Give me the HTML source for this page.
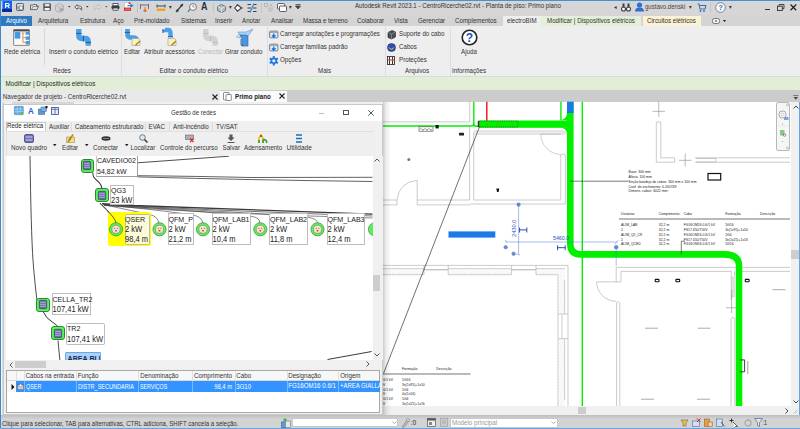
<!DOCTYPE html>
<html><head><meta charset="utf-8">
<style>
*{box-sizing:border-box;margin:0;padding:0}
html,body{width:800px;height:429px;overflow:hidden;background:#fff}
body{position:relative;font-family:"Liberation Sans",sans-serif;font-size:6.2px;color:#333}
.a{position:absolute}
.t{position:absolute;white-space:nowrap;line-height:8px;transform:scaleY(1.14)}
svg{position:absolute;overflow:visible}
</style></head><body>
<!-- window border -->
<div class="a" style="left:0;top:0;width:800px;height:1px;background:#4a90d9"></div>
<div class="a" style="left:0;top:0;width:1px;height:429px;background:#3e87d3"></div>
<div class="a" style="left:799px;top:101px;width:1px;height:328px;background:#6aa5e0"></div>

<!-- title bar -->
<div class="a" style="left:1px;top:1px;width:799px;height:14px;background:#d6d6d6"></div>
<!-- R logo -->
<div class="a" style="left:2.2px;top:1.1px;width:10.2px;height:8.4px;background:#1463ee"></div>
<div class="a" style="left:2.2px;top:1.1px;width:1.3px;height:8.4px;background:#5a9af8"></div>
<div class="a" style="left:2.2px;top:9.4px;width:10.2px;height:3px;background:#0b2d92"></div>
<svg style="left:5.4px;top:3.2px" width="5" height="5"><path d="M0.6 5 L0.6 0.5 L2.8 0.5 Q4.2 0.5 4.2 1.7 Q4.2 2.9 2.8 2.9 L0.6 2.9 M2.6 2.9 L4.4 5" fill="none" stroke="#fff" stroke-width="1.1"/></svg>
<!-- quick access icons -->
<svg style="left:16px;top:3px" width="8" height="8"><rect x="0.5" y="0.5" width="7" height="7" rx="0.8" fill="#dfe3e8" stroke="#5c6470" stroke-width="1"/><path d="M2 3 L2 6.5" stroke="#5c6470" stroke-width="1"/><rect x="3.3" y="3" width="3.2" height="3.3" fill="#f4f4f4" stroke="#6a727c" stroke-width="0.6"/><circle cx="1.5" cy="1.5" r="0.7" fill="#6aa0e0"/></svg>
<svg style="left:30px;top:4.3px" width="9" height="6"><path d="M0.5 1 L3 1 L3.8 0.5 L6.5 0.5 L6.5 2 L8.6 2 L7 5.6 L0.5 5.6 Z" fill="#e4e4e4" stroke="#5a6068" stroke-width="0.9"/><path d="M1.6 5.4 L2.8 2.6 L8.6 2.6" fill="none" stroke="#5a6068" stroke-width="0.6"/></svg>
<svg style="left:43px;top:3px" width="8" height="8"><rect x="0.3" y="0.3" width="7.6" height="7.6" rx="1" fill="#4a5462"/><rect x="1.8" y="0.8" width="4.6" height="2.6" fill="#e6e6e6"/><rect x="1.6" y="5" width="5" height="2.4" fill="#f6f6f6"/></svg>
<svg style="left:55px;top:2.5px" width="9" height="10"><path d="M4.5 0.5 L8.5 2.5 L8.5 7.5 L4.5 9.5 L0.5 7.5 L0.5 2.5 Z" fill="#d2d2d2" stroke="#ababab" stroke-width="0.8"/><path d="M0.5 2.5 L4.5 4.5 L8.5 2.5 M4.5 4.5 L4.5 9.5" stroke="#b6b6b6" fill="none" stroke-width="0.7"/><circle cx="6.5" cy="6.5" r="1.6" fill="#a0a0a0"/></svg>
<svg style="left:68px;top:6px" width="3" height="2"><path d="M0 0 L2.6 0 L1.3 1.6 Z" fill="#333"/></svg>
<svg style="left:74px;top:3.5px" width="9" height="7"><path d="M3.2 0.8 L0.8 3 L3.2 5.2 L3.2 4 L5.5 4 Q7 4 7.6 6.2 Q8.2 2 5.5 2 L3.2 2 Z" fill="#f4f4f4" stroke="#4a4f56" stroke-width="0.9" stroke-linejoin="round"/></svg>
<svg style="left:86.3px;top:6px" width="3" height="2"><path d="M0 0 L2.6 0 L1.3 1.6 Z" fill="#333"/></svg>
<svg style="left:92.5px;top:3.5px" width="9" height="7"><path d="M5.8 0.8 L8.2 3 L5.8 5.2 L5.8 4 L3.5 4 Q2 4 1.4 6.2 Q0.8 2 3.5 2 L5.8 2 Z" fill="#e4e4e4" stroke="#bcbcbc" stroke-width="0.9" stroke-linejoin="round"/></svg>
<svg style="left:105.2px;top:6px" width="3" height="2"><path d="M0 0 L2.6 0 L1.3 1.6 Z" fill="#555"/></svg>
<svg style="left:111px;top:2.8px" width="9" height="8"><rect x="2" y="0.5" width="5" height="2.5" fill="#fff" stroke="#3a3f47" stroke-width="0.8"/><rect x="0.4" y="2.6" width="8.2" height="3.6" rx="1.6" fill="#3a3f47"/><rect x="2" y="5" width="5" height="2.6" fill="#c8d4e0" stroke="#3a3f47" stroke-width="0.6"/></svg>
<svg style="left:123.7px;top:2.3px" width="9" height="9"><rect x="0.4" y="0.4" width="6" height="8.2" fill="#fff" stroke="#b0b0b0" stroke-width="0.5"/><rect x="0" y="5.6" width="7" height="3.2" fill="#d8251c"/><path d="M3.5 3.6 L7.8 3.6 M6.6 2.3 L8.6 3.6 L6.6 4.9" stroke="#2d82d8" stroke-width="1.2" fill="none"/><rect x="4.6" y="0.4" width="1.8" height="1.6" fill="#d8251c"/><path d="M1 7.2 L6 7.2" stroke="#fff" stroke-width="0.5"/></svg>
<div class="a" style="left:137px;top:3px;width:1px;height:10px;background:#c0c0c0"></div>
<svg style="left:140px;top:3px" width="9" height="10"><path d="M0.5 1 L0.5 6 M8.5 1 L8.5 6 M0.5 2 L8.5 2" stroke="#6a7078" stroke-width="1"/><circle cx="5" cy="7.5" r="1.6" fill="#e8702a"/><path d="M5 4 L5 6" stroke="#e8702a" stroke-width="1"/></svg>
<svg style="left:156px;top:3px" width="10" height="9"><path d="M1 3 L9 3 M1 1.5 L1 4.5 M9 1.5 L9 4.5" stroke="#3a4a5a" stroke-width="1"/><rect x="0.5" y="5.5" width="9" height="2.5" rx="1" fill="#e8a820"/></svg>
<div class="t" style="left:169px;top:3px;font-size:5px;color:#333">▾</div>
<svg style="left:175px;top:3px" width="9" height="10"><path d="M1 9 L8 1" stroke="#3a4048" stroke-width="1.2"/><circle cx="2.5" cy="7.5" r="1.2" fill="#3a4048"/><circle cx="6.5" cy="2.5" r="1.2" fill="#3a4048"/></svg>
<svg style="left:187px;top:3px" width="10" height="10"><circle cx="6" cy="4" r="3.4" fill="#fafafa" stroke="#555" stroke-width="0.8"/><path d="M6 2 L6 4 L7.5 4" stroke="#555" stroke-width="0.6" fill="none"/><path d="M3 6 L1 9" stroke="#3a6fb8" stroke-width="1.2"/></svg>
<div class="t" style="left:201px;top:2px;font-size:9px;font-weight:bold;color:#2a2f36;line-height:11px">A</div>
<div class="a" style="left:213px;top:3px;width:1px;height:10px;background:#c4c4c4"></div>
<svg style="left:217px;top:3.5px" width="9" height="9"><path d="M4.5 0.5 L8.5 2.5 L8.5 6.5 L4.5 8.5 L0.5 6.5 L0.5 2.5 Z" fill="#b4bcc4" stroke="#5a626c" stroke-width="0.8"/><path d="M0.5 2.5 L4.5 4.5 L8.5 2.5 M4.5 4.5 L4.5 8.5" stroke="#f0f0f0" fill="none" stroke-width="0.7"/></svg>
<div class="t" style="left:229px;top:3px;font-size:5px;color:#333">▾</div>
<svg style="left:234px;top:3.5px" width="9" height="8"><path d="M3.5 0.8 L7.5 4 L3.5 7.2 L0.8 4 Z" fill="#fff" stroke="#3a3f46" stroke-width="1.1"/><path d="M7 4 L8.6 4" stroke="#3a3f46" stroke-width="1"/></svg>
<svg style="left:247px;top:3px" width="10" height="10"><path d="M0.5 1.5 L4 1.5 M0.5 5 L4 5 M0.5 8.5 L4 8.5 M6 1.5 L9.5 1.5 M6 5 L9.5 5 M6 8.5 L9.5 8.5" stroke="#3a4048" stroke-width="1.2"/><path d="M3 9.5 L7 0.5" stroke="#3d8fe0" stroke-width="1.3"/></svg>
<div class="a" style="left:261px;top:3px;width:1px;height:10px;background:#c4c4c4"></div>
<svg style="left:264px;top:3px" width="9" height="9"><rect x="0.5" y="0.5" width="3" height="3" fill="none" stroke="#b4b4b4" stroke-width="0.8"/><rect x="5" y="5" width="3" height="3" fill="none" stroke="#b4b4b4" stroke-width="0.8"/><path d="M5.5 0.5 L8.5 3.5 M8.5 0.5 L5.5 3.5" stroke="#b4b4b4" stroke-width="0.8"/></svg>
<svg style="left:277px;top:3px" width="10" height="9"><rect x="0.5" y="0.5" width="7" height="5.5" rx="0.8" fill="#fafafa" stroke="#4a4f57" stroke-width="0.9"/><rect x="2.5" y="3" width="7" height="5.5" rx="0.8" fill="#fafafa" stroke="#4a4f57" stroke-width="0.9"/></svg>
<div class="t" style="left:289px;top:3px;font-size:5px;color:#333">▾</div>
<svg style="left:295px;top:4px" width="6" height="6"><path d="M0.5 0.5 L5.5 0.5 M0.5 2 L5.5 2 L3 5 Z" stroke="#444" fill="#444" stroke-width="0.8"/></svg>
<div class="t" style="left:355px;top:2.2px;font-size:6.15px;color:#333">Autodesk Revit 2023.1 - CentroRicerche02.rvt - Planta de piso: Primo piano</div>
<div class="t" style="left:614px;top:3px;font-size:5px;color:#333">◂</div>
<svg style="left:621px;top:3px" width="10" height="9"><circle cx="2.5" cy="6" r="2" fill="#fff" stroke="#3a4048" stroke-width="1.1"/><circle cx="7.5" cy="6" r="2" fill="#fff" stroke="#3a4048" stroke-width="1.1"/><rect x="1.5" y="0.5" width="2" height="4" fill="#3a4048"/><rect x="6.5" y="0.5" width="2" height="4" fill="#3a4048"/></svg>
<svg style="left:635px;top:2px" width="9" height="10"><circle cx="4.5" cy="3" r="2.6" fill="#2f6fd0"/><path d="M0 9.5 Q0 5.5 4.5 5.5 Q9 5.5 9 9.5 Z" fill="#2f6fd0"/></svg>
<div class="t" style="left:645px;top:2.5px;font-size:6.05px;color:#444">gustavo.denski</div>
<div class="t" style="left:689px;top:3px;font-size:5px;color:#333">▾</div>
<svg style="left:697px;top:3px" width="9" height="9"><path d="M0.5 1 L2 1 L3 6 L8 6 L8.8 2.5 L2.5 2.5" fill="none" stroke="#3d6fb8" stroke-width="1.1"/><circle cx="3.5" cy="8" r="0.9" fill="#3d6fb8"/><circle cx="7" cy="8" r="0.9" fill="#3d6fb8"/></svg>
<div class="a" style="left:710px;top:3px;width:1px;height:10px;background:#c4c4c4"></div>
<svg style="left:715px;top:2px" width="11" height="11"><circle cx="5.5" cy="5.5" r="4.8" fill="#fafafa" stroke="#6a6a6a" stroke-width="0.8"/><text x="5.5" y="8.2" font-size="7.5" font-weight="bold" fill="#2d6fd0" text-anchor="middle" font-family="Liberation Sans">?</text></svg>
<div class="t" style="left:729px;top:3px;font-size:5px;color:#333">▾</div>
<div class="a" style="left:765px;top:8.6px;width:4.6px;height:1.3px;background:#333"></div>
<svg style="left:777px;top:3.8px" width="8" height="7"><rect x="0.5" y="2.2" width="4.8" height="4.3" fill="none" stroke="#333" stroke-width="0.9"/><path d="M2.2 2.2 L2.2 0.5 L7 0.5 L7 4.6 L5.3 4.6" fill="none" stroke="#333" stroke-width="0.9"/></svg>
<svg style="left:790px;top:4.2px" width="7" height="7"><path d="M0.5 0.5 L6.2 6.2 M6.2 0.5 L0.5 6.2" stroke="#222" stroke-width="1.25"/></svg>

<!-- tab row -->
<div class="a" style="left:1px;top:15px;width:799px;height:11px;background:#d4d4d4"></div>
<div class="a" style="left:1px;top:16px;width:30.5px;height:10px;background:#2f79c0"></div>
<div class="t" style="left:6px;top:17px;font-size:6.2px;color:#fff">Arquivo</div>
<div class="t" style="left:38px;top:17px;font-size:6.2px;color:#333">Arquitetura</div>
<div class="t" style="left:80px;top:17px;font-size:6.2px;color:#333">Estrutura</div>
<div class="t" style="left:113px;top:17px;font-size:6.2px;color:#333">Aço</div>
<div class="t" style="left:134px;top:17px;font-size:6.2px;color:#333">Pré-moldado</div>
<div class="t" style="left:181px;top:17px;font-size:6.2px;color:#333">Sistemas</div>
<div class="t" style="left:215px;top:17px;font-size:6.2px;color:#333">Inserir</div>
<div class="t" style="left:242px;top:17px;font-size:6.2px;color:#333">Anotar</div>
<div class="t" style="left:271px;top:17px;font-size:6.2px;color:#333">Analisar</div>
<div class="t" style="left:303px;top:17px;font-size:6.2px;color:#333">Massa e terreno</div>
<div class="t" style="left:357px;top:17px;font-size:6.2px;color:#333">Colaborar</div>
<div class="t" style="left:394px;top:17px;font-size:6.2px;color:#333">Vista</div>
<div class="t" style="left:418px;top:17px;font-size:6.2px;color:#333">Gerenciar</div>
<div class="t" style="left:455px;top:17px;font-size:6.2px;color:#333">Complementos</div>
<div class="a" style="left:502.5px;top:16px;width:38.5px;height:10px;background:#eeeeee"></div>
<div class="t" style="left:507px;top:17px;font-size:6.2px;color:#333">electroBIM</div>
<div class="a" style="left:541px;top:16px;width:100px;height:10px;background:#e4efd9"></div>
<div class="t" style="left:547px;top:17px;font-size:6.2px;color:#333">Modificar | Dispositivos elétricos</div>
<div class="a" style="left:643px;top:16px;width:58px;height:10px;background:#fbf1d4"></div>
<div class="t" style="left:647px;top:17px;font-size:6.2px;color:#333">Circuitos elétricos</div>
<svg style="left:712px;top:18px" width="8" height="6"><rect x="0.5" y="0.5" width="7" height="5" rx="2" fill="#f4f4f4" stroke="#555" stroke-width="0.8"/><rect x="3" y="2.5" width="2" height="1" fill="#333"/></svg>
<svg style="left:723px;top:20.3px" width="4" height="3"><path d="M0 0 L3 0 L1.5 2 Z" fill="#111"/></svg>

<!-- ribbon -->
<div class="a" style="left:1px;top:26px;width:799px;height:51px;background:#eeeeee"></div>
<div class="a" style="left:1px;top:76px;width:799px;height:1px;background:#dadada"></div>
<!-- panel separators -->
<div class="a" style="left:44px;top:28px;width:1px;height:37px;background:#d8d8d8"></div>
<div class="a" style="left:121px;top:27px;width:1px;height:49px;background:#dedede"></div>
<div class="a" style="left:266.5px;top:27px;width:1px;height:49px;background:#dedede"></div>
<div class="a" style="left:384.5px;top:27px;width:1px;height:49px;background:#dedede"></div>
<div class="a" style="left:449.5px;top:27px;width:1px;height:49px;background:#dedede"></div>

<!-- Rede eletrica icon -->
<svg style="left:13px;top:29px" width="17" height="17"><rect x="0.6" y="0.6" width="15.8" height="15.8" rx="0.6" fill="#fafafa" stroke="#7a7a7a" stroke-width="0.9"/><rect x="0.6" y="0.6" width="15.8" height="1.8" fill="#4a4a4a"/><rect x="1.7" y="2.9" width="5.6" height="6.7" fill="#3f9be6"/><rect x="12.6" y="2.9" width="3.6" height="2.8" fill="#3f9be6"/><rect x="12.6" y="7.4" width="3.6" height="3.4" fill="#3f9be6"/><rect x="12.6" y="12" width="3.6" height="3.5" fill="#3f9be6"/><path d="M9.9 4 L9.9 13.3 M8.5 4 L11.5 4 M9.9 8.6 L12.6 8.6 M9.9 13.3 L12.6 13.3" stroke="#f08a3a" stroke-width="1"/></svg>
<div class="t" style="left:4px;top:48px;font-size:6.15px;color:#333">Rede elétrica</div>
<!-- pipe icon -->
<svg style="left:75px;top:29px" width="17" height="17"><path d="M3.8 0 L3.8 6.5 Q3.8 9.5 6.8 9.5 L10 9.5 Q13.2 9.5 13.2 12.5 L13.2 16.7" fill="none" stroke="#4aa0e8" stroke-width="5.3"/><path d="M1 4.4 L6.6 4.4 M8.4 6.6 L8.4 12.4 M10.4 13.4 L16 13.4" stroke="#245a8a" stroke-width="1"/></svg>
<div class="t" style="left:49px;top:48px;font-size:6.3px;color:#333">Inserir o conduto elétrico</div>
<div class="t" style="left:53px;top:67px;font-size:6.2px;color:#333">Redes</div>

<svg style="left:124px;top:29px" width="17" height="17"><path d="M3.5 0 L3.5 5 Q3.5 8.5 7 8.5 L9 8.5 Q13 8.5 13 12" fill="none" stroke="#4aa0e8" stroke-width="4.6"/><path d="M0.8 3.4 L6.2 3.4" stroke="#245a8a" stroke-width="1"/><path d="M8 9.5 L14.5 9.5 L16 11 L16 16.5 L8 16.5 Z" fill="#f8f2c0" stroke="#9a9a8a" stroke-width="0.6"/><path d="M11.5 16.3 L16 12" stroke="#b07a20" stroke-width="1.3"/></svg>
<div class="t" style="left:124px;top:48px;font-size:6.2px;color:#333">Editar</div>
<svg style="left:162px;top:29px" width="17" height="17"><path d="M3 0.5 L3 1 Q3 1 6 1 Q8.5 1 8.5 4.5 L8.5 8" fill="none" stroke="#4aa0e8" stroke-width="4.4"/><path d="M1 0 L1 4 M6 7.8 L11 7.8" stroke="#245a8a" stroke-width="1"/><path d="M6 9.5 L12.5 9.5 L14 11 L14 16.5 L6 16.5 Z" fill="#f8f2c0" stroke="#9a9a8a" stroke-width="0.6"/><path d="M9.5 16.3 L14 12" stroke="#b07a20" stroke-width="1.3"/></svg>
<div class="t" style="left:144px;top:48px;font-size:6.2px;color:#333">Atribuir acessórios</div>
<svg style="left:201.5px;top:29px" width="17" height="17"><path d="M3.8 0 L3.8 6.5 Q3.8 9.5 6.8 9.5 L10 9.5 Q13.2 9.5 13.2 12.5 L13.2 16.7" fill="none" stroke="#d2d2d2" stroke-width="5.3"/><path d="M1 4.4 L6.6 4.4 M8.4 6.6 L8.4 12.4 M10.4 13.4 L16 13.4" stroke="#bdbdbd" stroke-width="1"/></svg>
<div class="t" style="left:198px;top:48px;font-size:6.2px;color:#b8b8b8">Conectar</div>
<svg style="left:235px;top:28px" width="18" height="18"><path d="M3 4 L11 4 L18 1 L13 8 L5 8 Z" fill="#a8d4f6" stroke="#4a8ad0" stroke-width="0.5"/><path d="M5 7 L11 7 L13 8 L13 18 L7 18 L7 11 Z" fill="#4a98e4" stroke="#2a5a9a" stroke-width="0.6"/><path d="M1 9 L5 6 L5 10 Z" fill="#c8e4fa" stroke="#4a8ad0" stroke-width="0.4"/><path d="M6 11 L6 17 L8 18" fill="none" stroke="#2a4a7a" stroke-width="0.8"/></svg>
<div class="t" style="left:225px;top:48px;font-size:6.2px;color:#333">Girar conduto</div>
<div class="t" style="left:159.5px;top:67px;font-size:6.35px;color:#333">Editar o conduto elétrico</div>

<svg style="left:269px;top:30px" width="10" height="9"><rect x="0.6" y="1.2" width="8.3" height="6.6" rx="0.8" fill="#e6ecf4" stroke="#6a7480" stroke-width="0.9"/><path d="M0.6 2.6 L8.9 2.6" stroke="#6a7480" stroke-width="0.6"/><path d="M4.75 3.5 L4.75 6.8 M3 5.2 L4.75 7.4 L6.5 5.2" stroke="#1f7ae0" stroke-width="1.3" fill="none"/></svg>
<div class="t" style="left:280px;top:30px;font-size:6.12px;color:#333">Carregar anotações e programações</div>
<svg style="left:269px;top:43px" width="10" height="9"><rect x="0.6" y="1.2" width="8.3" height="6.6" rx="0.8" fill="#e6ecf4" stroke="#6a7480" stroke-width="0.9"/><path d="M0.6 2.6 L8.9 2.6" stroke="#6a7480" stroke-width="0.6"/><path d="M4.75 3.5 L4.75 6.8 M3 5.2 L4.75 7.4 L6.5 5.2" stroke="#1f7ae0" stroke-width="1.3" fill="none"/></svg>
<div class="t" style="left:280px;top:43px;font-size:6.12px;color:#333">Carregar famílias padrão</div>
<svg style="left:269px;top:56px" width="10" height="10"><g transform="translate(4.8 4.8)" fill="#1f7ae0"><circle r="3.3"/><rect x="-1" y="-4.7" width="2" height="9.4"/><rect x="-1" y="-4.7" width="2" height="9.4" transform="rotate(60)"/><rect x="-1" y="-4.7" width="2" height="9.4" transform="rotate(120)"/><circle r="1.5" fill="#eee"/></g></svg>
<div class="t" style="left:280px;top:56px;font-size:6.2px;color:#333">Opções</div>
<div class="t" style="left:318px;top:67px;font-size:6.2px;color:#333">Mais</div>

<svg style="left:387px;top:30px" width="9" height="9"><path d="M1 2.5 L5 0.5 L8.5 2 L8.5 7 L4.5 9 L1 7.5 Z" fill="#4a4f56" stroke="#222" stroke-width="0.6"/><path d="M1 2.5 L4.5 4 L8.5 2 M4.5 4 L4.5 9" stroke="#aaa" stroke-width="0.5" fill="none"/></svg>
<div class="t" style="left:399px;top:30px;font-size:6.2px;color:#333">Suporte do cabo</div>
<svg style="left:387px;top:43px" width="9" height="9"><circle cx="4.5" cy="4.5" r="4" fill="#3050b0"/><path d="M2 4.5 Q4.5 8 7 4.5" stroke="#e8d040" stroke-width="1" fill="none"/><circle cx="4.5" cy="4.5" r="4" fill="none" stroke="#1a2a60" stroke-width="0.6"/></svg>
<div class="t" style="left:399px;top:43px;font-size:6.2px;color:#333">Cabos</div>
<svg style="left:387px;top:56px" width="8" height="9"><rect x="0.5" y="0.5" width="7" height="8" fill="#f4f4f4" stroke="#333" stroke-width="0.9"/><path d="M2.5 1 L2.5 8 M5.5 1 L5.5 8" stroke="#333" stroke-width="1"/><rect x="1.5" y="3" width="2" height="2" fill="#d03020"/><rect x="4.5" y="3" width="2" height="2" fill="#d03020"/></svg>
<div class="t" style="left:399px;top:56px;font-size:6.2px;color:#333">Proteções</div>
<div class="t" style="left:405px;top:67px;font-size:6.2px;color:#333">Arquivos</div>

<svg style="left:461px;top:29px" width="17" height="17"><circle cx="8.5" cy="8.5" r="7.3" fill="#fff" stroke="#222" stroke-width="1.6"/><text x="8.5" y="13" font-size="12" font-weight="bold" fill="#1d4fc4" text-anchor="middle" font-family="Liberation Sans">?</text></svg>
<div class="t" style="left:461px;top:48px;font-size:6.2px;color:#333">Ajuda</div>
<div class="t" style="left:452px;top:67px;font-size:6.2px;color:#333">Informações</div>

<!-- context bar -->
<div class="a" style="left:1px;top:77px;width:799px;height:13px;background:#e3eed8"></div>
<div class="t" style="left:5.5px;top:79.5px;font-size:6.33px;color:#2a2a2a">Modificar | Dispositivos elétricos</div>

<!-- view tabs bar -->
<div class="a" style="left:1px;top:90px;width:799px;height:11.5px;background:#cccccc"></div>
<div class="a" style="left:1px;top:90px;width:219px;height:11.5px;background:#e9e9e9"></div>
<div class="t" style="left:2.8px;top:92.7px;font-size:6.2px;color:#333">Navegador de projeto - CentroRicerche02.rvt</div>
<svg style="left:212px;top:93.5px" width="6" height="6"><path d="M0.5 0.5 L5.5 5.5 M5.5 0.5 L0.5 5.5" stroke="#222" stroke-width="1.1"/></svg>
<div class="a" style="left:220px;top:90.5px;width:67px;height:11.5px;background:#fbfbfb"></div>
<svg style="left:223px;top:92px" width="9" height="9"><rect x="0.5" y="0.5" width="5.5" height="7.5" rx="0.6" fill="#fff" stroke="#6a6f78" stroke-width="0.8"/><rect x="3" y="2.5" width="5.3" height="6" rx="0.6" fill="#fff" stroke="#6a6f78" stroke-width="0.8"/></svg>
<div class="t" style="left:235px;top:92.5px;font-size:6.2px;font-weight:bold;color:#222">Primo piano</div>
<svg style="left:279px;top:93.3px" width="6" height="6"><path d="M0.5 0.5 L5.5 5.5 M5.5 0.5 L0.5 5.5" stroke="#222" stroke-width="1.1"/></svg>
<svg style="left:793px;top:94.5px" width="6" height="6"><path d="M0.3 0.5 L5.3 0.5" stroke="#555" stroke-width="0.7"/><path d="M0.5 2 L5.1 2 L2.8 4.8 Z" fill="#444"/></svg>

<!-- drawing area -->
<div class="a" style="left:383px;top:101.5px;width:408px;height:305px;background:#fff"></div>
<svg style="left:0;top:0" width="800" height="429" viewBox="0 0 800 429">
<defs>
<clipPath id="dc"><rect x="383" y="101.5" width="408" height="304.7"/></clipPath>
<pattern id="hatch" width="3" height="3" patternUnits="userSpaceOnUse"><path d="M0 3 L3 0 M0 0 L3 3" stroke="#dedede" stroke-width="0.35"/></pattern>
</defs>
<g clip-path="url(#dc)">
<!-- walls (gray) -->
<g fill="none" stroke="#a8a8a8" stroke-width="0.6">
<path d="M383 121.9 L469.7 121.9 L469.7 101.5"/>
<path d="M469.6 126.2 L469.6 200 M473.7 131.7 L473.7 200"/>
<path d="M473.7 130.8 L562.5 130.8 Q565.3 130.8 565.3 133 Q565.3 134.2 562.5 134.2 L473.7 134.2" stroke="#c8c8c8" fill="#ececec"/><path d="M560.8 155 L560.8 200 L473.7 200"/>
<path d="M470 204 L565.3 204 L565.3 155 Q563 152.8 560.8 155"/>

<path d="M383 200 L397 200 L397 204.9 L383 204.9 M417 200 L470 200 M417 204.9 L470 204.9"/>
<path d="M417.2 204.9 L417.2 180.4 Q399 182 397 200"/>
<path d="M540.8 134.2 A20.2 20.2 0 0 0 561 154.4 M540.8 134.2 L561 134.2" stroke="#b0b0b0"/>

<!-- lower wall with hatch -->
<path d="M383 265.4 L568 265.4 L568 406"/>
<path d="M383 268.6 L424 268.6 M448.2 268.6 L511.6 268.6 M536 268.6 L564.6 268.6 M383 274.7 L424 274.7 M448.2 274.7 L511.6 274.7 M536 274.7 L558 274.7 L558 406"/>
<path d="M424 269.8 L448.2 269.8 M511.6 269.8 L536 269.8" stroke="#777"/>
<path d="M424 265.4 L424 274.7 M448.2 265.4 L448.2 274.7 M511.6 265.4 L511.6 274.7 M536 265.4 L536 274.7"/>
<path d="M564.6 280 L564.6 314 M564.6 338.7 L564.6 400"/>
<path d="M558 314 L568 314 M558 338.7 L568 338.7"/>
<path d="M562 314 L562 338.7" stroke="#b0b0b0"/>
<!-- right rooms -->
<path d="M616.2 267.4 L790 267.4"/>
<path d="M621 271.4 L731.7 271.4 M742 271.4 L790 271.4"/>
<path d="M616.2 267.4 L616.2 281.9 M621 271.4 L621 281.9 M616.6 406 L616.6 303 Q618.2 300.5 619.8 303 L619.8 406"/>
<path d="M596.6 281.9 A20 19.5 0 0 0 616.6 301.4"/>
<path d="M596.6 281.9 L621 281.9"/>
<path d="M731.2 271.4 L731.2 300 M734.5 271.4 L734.5 276"/><rect x="731.6" y="277" width="2.8" height="20" fill="#e2e2e2" stroke="#bbb" stroke-width="0.4"/>
<path d="M731 318.5 L731 406 M734.8 318.5 L734.8 406 M731 318.5 Q733 316 734.8 318.5"/>
<path d="M656.3 162.2 L656.3 122 L660.8 122 L660.8 157.8 L674.6 157.8 L674.6 162.2 Z"/>
<path d="M695 157.8 L790 157.8 M695 162.2 L790 162.2"/>
<path d="M696 158.5 L716 158.5 L716 162 L696 162" stroke="#aaa"/>
</g>
<g stroke="#aaaaaa" stroke-width="1">
<path d="M645 328.2 L658 328.2 M697.6 328.2 L710.5 328.2 M641 399.2 L654 399.2 M697 399.2 L710 399.2 M772.4 289.7 L785.5 289.7"/>
</g>
<rect x="383" y="268" width="41" height="6.5" fill="url(#hatch)"/>
<rect x="448.2" y="268" width="63.4" height="6.5" fill="url(#hatch)"/>
<rect x="536" y="268" width="28.6" height="6.5" fill="url(#hatch)"/>
<rect x="558" y="274.7" width="6.6" height="39.3" fill="url(#hatch)"/>
<rect x="558" y="338.7" width="6.6" height="67" fill="url(#hatch)"/>
<!-- crosshairs -->
<g stroke="#888" stroke-width="0.6">
<path d="M652.5 111.3 L665 111.3 M658.8 101.5 L658.8 116.8"/>
<path d="M679 160.3 L691.5 160.3 M685.2 153.5 L685.2 166.5"/>
<path d="M726 307.8 L737 307.8 M731.6 290 L731.6 313"/>
</g>
<!-- thin green lines -->
<g stroke="#00f000" stroke-width="1.4" fill="none">
<path d="M383 126 L471.5 126 Q473.8 126 473.8 123.5 L473.8 101.5 M473.8 123.5 Q473.8 126.3 476 126.3 L479 126.3"/>
<path d="M560.9 101.5 L560.9 120"/>
<path d="M582.3 101.5 L582.3 406"/>
</g>
<!-- red line -->
<path d="M486.8 101.5 L486.8 121" stroke="#f41c1c" stroke-width="1.5"/>
<!-- thick green -->
<g fill="#00f000">
<rect x="478.8" y="120.5" width="88.2" height="7.3"/>
<path d="M559 120.3 Q567 120.3 567 112 L567 120.3 Z"/><path d="M559 127.6 Q567 127.6 567 135 L567 127.6 Z"/>
<path d="M567 101.5 L573.6 101.5 L573.6 244 Q573.6 250.9 580.5 250.9 L724 250.9 Q742.3 250.9 742.3 266 L742.3 406 L735.8 406 L735.8 266 Q735.8 257.7 724 257.7 L580.5 257.7 Q567 257.7 567 244 Z"/>
</g>
<rect x="567" y="101.5" width="6.6" height="11.5" fill="#1a7ae8"/>
<rect x="478.5" y="121" width="39.5" height="6" fill="none" stroke="#222" stroke-width="0.5" stroke-dasharray="1 0.8"/>
<path d="M478.5 121 L478.5 127" stroke="#333" stroke-width="1.5"/>
<g fill="#e05020"><circle cx="487" cy="124.3" r="0.7"/><circle cx="498" cy="124.3" r="0.8"/><circle cx="512" cy="124.3" r="0.7"/></g>
<!-- diagonal line -->
<path d="M479.5 126.8 L383.5 373.5" stroke="#333" stroke-width="0.7"/>
<!-- symbols -->
<rect x="419" y="126.8" width="14" height="4.4" fill="#fff" stroke="#444" stroke-width="0.6"/>
<path d="M420 129.5 Q421 127.5 422 129.5 Q423 131 424 129.5 Q425 127.5 426 129.5 Q427 131 428 129.5 Q429 127.5 430 129.5 Q431 131 432 129.5" stroke="#333" stroke-width="0.6" fill="none"/>
<rect x="435.5" y="125" width="3.2" height="3.4" fill="#111"/>
<rect x="459" y="132.8" width="5" height="2.7" rx="0.6" fill="#222"/>
<circle cx="408.8" cy="159.4" r="1.5" fill="#777"/>
<path d="M496.3 188.5 L499.3 188.5 L498.6 192 L497 192 Z" fill="#111"/>
<path d="M570 181.2 L628.6 181.2" stroke="#222" stroke-width="0.6"/>
<rect x="708" y="173.5" width="12.7" height="6.5" fill="#fff" stroke="#111" stroke-width="1.2"/>
<rect x="655.2" y="279.4" width="3.8" height="2.4" rx="0.5" fill="#fff" stroke="#111" stroke-width="1.1"/>
<rect x="675.9" y="279.4" width="3.8" height="2.4" rx="0.5" fill="#fff" stroke="#111" stroke-width="1.1"/>
<rect x="745.3" y="279.4" width="3.8" height="2.4" rx="0.5" fill="#fff" stroke="#111" stroke-width="1.1"/>
<path d="M681.3 254.3 L681.3 241.2 L685 241.2" stroke="#222" stroke-width="0.6" fill="none"/>
<path d="M740 359.9 L744.6 359.9 L744.6 371.8 L740 371.8" stroke="#111" stroke-width="0.8" fill="none"/>
<path d="M747.8 361 L747.8 374" stroke="#444" stroke-width="0.5"/>
<!-- blue elements -->
<rect x="448.5" y="231.4" width="46.8" height="6.2" fill="#1a7ae8"/>
<g stroke="#4a7ad8" stroke-width="0.5" fill="none">
<path d="M518.6 204.5 L518.6 254.3"/>
<path d="M505 242 L617.5 242 M614.8 244.2 L618.4 240.2 M616.2 247.2 L616.2 266"/>
<path d="M519.6 227.5 L519.6 232.5 M526.8 227.5 L526.8 232.5 M519.6 229.9 L526.8 229.9" stroke="#2a4ab8" stroke-width="1"/>
<path d="M557.6 245.3 L557.6 250.2 M565.2 245.3 L565.2 250.2 M557.6 247.7 L565.2 247.7" stroke="#2a4ab8" stroke-width="1"/>
<path d="M505 240 L507 242 M516 254 L520 255"/>
</g>
<g fill="#6a8ad0" stroke="#4a6ac0" stroke-width="0.4"><circle cx="518.6" cy="204.6" r="1.8"/><circle cx="505.7" cy="247.2" r="1.8"/><circle cx="513.6" cy="253.7" r="1.8"/><circle cx="616.2" cy="247.2" r="1.9"/></g>
<text x="553" y="240.3" font-size="5.3" fill="#2a4ab8" font-family="Liberation Sans" textLength="16" lengthAdjust="spacingAndGlyphs">5460.0</text>
<text transform="translate(516.3 237) rotate(-90)" font-size="5.5" fill="#2a4ab8" font-family="Liberation Sans" textLength="17.4" lengthAdjust="spacingAndGlyphs">2430.0</text>
<!-- annotation text -->
<g font-family="Liberation Sans" font-size="3.43" fill="#222">
<text x="628.6" y="173">Base: 300 mm</text>
<text x="628.6" y="177.9">Altura: 100 mm</text>
<text x="628.6" y="182.7">Seção bandeja de cabos: 300 mm x 100 mm</text>
<text x="628.6" y="187.5">Coef. de enchimento: 0.200749</text>
<text x="628.6" y="192.3">Dimens. cabos: 6022 mm²</text>
<text x="621" y="215">Usuários</text><text x="658.8" y="215">Comprimento</text><text x="683.7" y="215">Cabo</text><text x="725.2" y="215">Formação</text><text x="760" y="215">Descrição</text>
<text x="621" y="225.8">ALIM_LAB</text><text x="658.8" y="225.8">32,2 m</text><text x="683.7" y="225.8">FG16OM16 0.6/1 kV</text><text x="725.2" y="225.8">5G16</text>
<text x="621" y="230.7">2</text><text x="658.8" y="230.7">32,2 m</text><text x="683.7" y="230.7">FS17 450/750V</text><text x="725.2" y="230.7">3x(1x95)+1x50</text>
<text x="621" y="235.6">ALIM_Q2_CR</text><text x="658.8" y="235.6">32,2 m</text><text x="683.7" y="235.6">FG16OM16 0.6/1 kV</text><text x="725.2" y="235.6">5G4</text>
<text x="621" y="240.5">2</text><text x="658.8" y="240.5">32,2 m</text><text x="683.7" y="240.5">FS17 450/750V</text><text x="725.2" y="240.5">3x(1x25)+1x16</text>
<text x="621" y="245.4">ALIM_QCED</text><text x="658.8" y="245.4">32,2 m</text><text x="683.7" y="245.4">FG16OM16 0.6/1 kV</text><text x="725.2" y="245.4">5G16</text>
<text x="402" y="370.2">Formação</text><text x="436.3" y="370.2">Descrição</text>
<text x="361.6" y="380.8">FG16OM16 0.6/1 kV</text><text x="402" y="380.8">5G16</text>
<text x="361.6" y="385.7">FS17 450/750V</text><text x="402" y="385.7">3x(1x95)+1x50</text>
<text x="361.6" y="390.5">FG16OM16 0.6/1 kV</text><text x="402" y="390.5">5G4</text>
<text x="361.6" y="395.4">FS17 450/750V</text><text x="402" y="395.4">4x(1x16)</text>
<text x="361.6" y="400.2">FG16OM16 0.6/1 kV</text><text x="402" y="400.2">5G4</text>
<text x="361.6" y="405">FS17 450/750V</text><text x="402" y="405">3x(1x25)+1x16</text>
</g>
<path d="M619 219 L790 219" stroke="#777" stroke-width="1.2"/>
<path d="M383 374 L470.5 374" stroke="#777" stroke-width="1.2"/>
</g>
</svg>
<!-- navigation bar widget -->
<div class="a" style="left:776px;top:102.3px;width:14.3px;height:49px;background:#f6f6f6;border:1px solid #b8b8b8;border-radius:2px"></div>
<svg style="left:776px;top:102px" width="15" height="50"><circle cx="11.5" cy="3" r="1.1" fill="none" stroke="#999" stroke-width="0.5"/><circle cx="6.5" cy="12.5" r="3.6" fill="#fff" stroke="#999" stroke-width="0.9"/><circle cx="6.5" cy="12.5" r="1.6" fill="none" stroke="#aaa" stroke-width="0.6"/><rect x="8" y="15" width="4.5" height="3" fill="#7aa4e0"/><path d="M6 22 L7 22" stroke="#666" stroke-width="0.6"/><path d="M2 24 L13 24" stroke="#ddd" stroke-width="0.5"/><rect x="4" y="28" width="4.5" height="5.5" fill="#8ac88a"/><circle cx="8.5" cy="33" r="1.4" fill="none" stroke="#555" stroke-width="0.5"/><path d="M6 39.5 L7 39.5" stroke="#666" stroke-width="0.6"/><circle cx="11.5" cy="46" r="1.1" fill="none" stroke="#999" stroke-width="0.5"/></svg>
<!-- right scrollbar -->
<div class="a" style="left:791px;top:101.5px;width:8px;height:305px;background:#f0f0f0"></div>
<svg style="left:792.5px;top:105px" width="6" height="4"><path d="M0.5 3.5 L3 1 L5.5 3.5" fill="none" stroke="#333" stroke-width="0.9"/></svg>
<div class="a" style="left:791px;top:250.4px;width:8px;height:8.2px;background:#cdcdcd"></div>
<svg style="left:792.5px;top:399.5px" width="6" height="4"><path d="M0.5 0.5 L3 3 L5.5 0.5" fill="none" stroke="#333" stroke-width="0.9"/></svg>
<!-- bottom scrollbar -->
<div class="a" style="left:383px;top:406.2px;width:416px;height:9px;background:#f0f0f0"></div>
<div class="a" style="left:577.7px;top:406.7px;width:8.3px;height:7.1px;background:#cdcdcd"></div>
<svg style="left:785px;top:408px" width="4" height="6"><path d="M0.5 0.5 L3 3 L0.5 5.5" fill="none" stroke="#333" stroke-width="0.9"/></svg>
<svg style="left:793px;top:409px" width="5" height="5"><path d="M4.5 0.5 L0.5 4.5 M4.5 2.5 L2.5 4.5" stroke="#aaa" stroke-width="0.6"/></svg>

<!-- left navigator strip behind dialog -->
<div class="a" style="left:1px;top:101.5px;width:382px;height:314px;background:#f0f0f0"></div>
<div class="a" style="left:1px;top:101.5px;width:1px;height:314px;background:#fbf3ee"></div>
<div class="a" style="left:2px;top:101.5px;width:3px;height:314px;background:linear-gradient(90deg,#d4d4d4,#ececec)"></div>
<div class="a" style="left:3px;top:304px;width:1px;height:7px;background:#888"></div>
<!-- navigator leaking row -->
<div class="a" style="left:12px;top:101.5px;width:62px;height:2px;background:#d6d6d6"></div>

<!-- dialog shadow right -->
<div class="a" style="left:383px;top:101.5px;width:8px;height:314px;background:linear-gradient(90deg,rgba(0,0,0,0.2),rgba(0,0,0,0.07) 40%,rgba(0,0,0,0))"></div>

<!-- dialog -->
<div class="a" style="left:3px;top:103.5px;width:380px;height:311.5px;background:#f0f0f0;border:1px solid #c9c9c9"></div>
<div class="a" style="left:4px;top:104.5px;width:378px;height:16px;background:#ffffff"></div>
<svg style="left:14px;top:106.3px" width="10" height="9"><rect x="0.3" y="0.3" width="9" height="8.4" rx="1" fill="#5aa8e6" stroke="#3a7ab8" stroke-width="0.5"/><path d="M0.5 3 L9 3 M0.5 5.7 L9 5.7 M3.3 0.5 L3.3 8.5 M6.3 0.5 L6.3 8.5" stroke="#c8e4fa" stroke-width="0.6"/><rect x="6.5" y="6" width="2.6" height="2.4" fill="#60b848"/></svg>
<div class="t" style="left:28px;top:106.5px;font-size:8px;font-weight:bold;color:#2a5cd0;line-height:9px">A</div>
<svg style="left:38px;top:106.3px" width="10" height="9"><rect x="0.3" y="3" width="6.5" height="5.5" fill="#5a9ad0" stroke="#3a6a9a" stroke-width="0.5"/><rect x="3" y="1" width="5.5" height="4.5" fill="#7ab0e0" stroke="#3a6a9a" stroke-width="0.5"/><rect x="7.5" y="0" width="2" height="2.2" fill="#111"/></svg>
<svg style="left:51px;top:107px" width="8" height="8"><rect x="0.5" y="0.5" width="7" height="7" fill="#e8ecf8" stroke="#5060a8" stroke-width="0.9"/><path d="M4 0.5 L4 7.5 M0.5 2.3 L7.5 2.3" stroke="#5060a8" stroke-width="0.8"/></svg>
<div class="t" style="left:171px;top:109px;font-size:6.1px;color:#333">Gestão de redes</div>
<div class="a" style="left:318.5px;top:112.5px;width:5px;height:1px;background:#bdbdbd"></div>
<div class="a" style="left:343px;top:110px;width:5.8px;height:5.4px;border:0.8px solid #555"></div>
<svg style="left:367.5px;top:110px" width="6" height="6"><path d="M0.3 0.3 L5.7 5.7 M5.7 0.3 L0.3 5.7" stroke="#444" stroke-width="0.9"/></svg>

<!-- tabs -->
<div class="a" style="left:4px;top:120.5px;width:378px;height:11px;background:#f0f0f0"></div>
<div class="a" style="left:49px;top:121.5px;width:23px;height:10px;background:#ececec;border-right:1px solid #dadada"></div>
<div class="a" style="left:73px;top:121.5px;width:73px;height:10px;background:#ececec;border-right:1px solid #dadada"></div>
<div class="a" style="left:147px;top:121.5px;width:23px;height:10px;background:#ececec;border-right:1px solid #dadada"></div>
<div class="a" style="left:171px;top:121.5px;width:42px;height:10px;background:#ececec;border-right:1px solid #dadada"></div>
<div class="a" style="left:214px;top:121.5px;width:24px;height:10px;background:#ececec;border-right:1px solid #dadada"></div>
<div class="a" style="left:5.5px;top:121.5px;width:40.5px;height:9.5px;background:#fff;border:1px solid #c8c8c8;border-bottom:none"></div>
<div class="t" style="left:7px;top:122px;font-size:6.15px;color:#222">Rede elétrica</div>
<div class="t" style="left:49px;top:123px;font-size:6.2px;color:#333">Auxiliar</div>
<div class="t" style="left:75px;top:123px;font-size:6.2px;color:#333">Cabeamento estruturado</div>
<div class="t" style="left:148.5px;top:123px;font-size:6.2px;color:#333">EVAC</div>
<div class="t" style="left:173px;top:123px;font-size:6.2px;color:#333">Anti-incêndio</div>
<div class="t" style="left:216px;top:123px;font-size:6.2px;color:#333">TV/SAT</div>

<!-- toolbar -->
<div class="a" style="left:5.5px;top:131px;width:367px;height:24.5px;background:#efefef;border-top:1px solid #e0e0e0;border-left:1px solid #e0e0e0"></div>
<svg style="left:24px;top:134px" width="10" height="9"><rect x="0.5" y="0.5" width="9" height="8" rx="1.5" fill="#7070b8" stroke="#404080" stroke-width="0.8"/><path d="M1.5 3 L8.5 3 M1.5 6 L8.5 6" stroke="#e8e8f8" stroke-width="0.8"/></svg>
<div class="t" style="left:11px;top:143.5px;font-size:6.29px;color:#333">Novo quadro</div>
<svg style="left:53.0px;top:144px" width="4" height="3"><path d="M0 0 L3.5 0 L1.75 2.2 Z" fill="#222"/></svg>
<svg style="left:66px;top:134px" width="9" height="9"><path d="M0.5 3 L8.5 3 L8.5 8.5 L0.5 8.5 Z" fill="#f0e080" stroke="#a09040" stroke-width="0.6"/><path d="M2 8 L7 0.5" stroke="#c08020" stroke-width="1.5"/><path d="M2.5 5 L5 5" stroke="#555" stroke-width="0.6"/></svg>
<div class="t" style="left:62px;top:143.5px;font-size:6.2px;color:#333">Editar</div>
<svg style="left:84.5px;top:144px" width="4" height="3"><path d="M0 0 L3.5 0 L1.75 2.2 Z" fill="#222"/></svg>
<svg style="left:101px;top:136px" width="10" height="5"><ellipse cx="5" cy="2.5" rx="4.5" ry="2.2" fill="#333"/><path d="M2 2.5 L8 2.5" stroke="#999" stroke-width="0.8"/></svg>
<div class="t" style="left:93px;top:143.5px;font-size:6.2px;color:#333">Conectar</div>
<svg style="left:124.5px;top:144px" width="4" height="3"><path d="M0 0 L3.5 0 L1.75 2.2 Z" fill="#222"/></svg>
<svg style="left:139px;top:134px" width="9" height="9"><circle cx="3.5" cy="3.5" r="2.8" fill="#d8ecfa" stroke="#666" stroke-width="0.9"/><path d="M5.5 5.5 L8.5 8.5" stroke="#333" stroke-width="1.5"/></svg>
<div class="t" style="left:130.5px;top:143.5px;font-size:6.2px;color:#333">Localizar</div>
<svg style="left:185px;top:134px" width="9" height="8"><rect x="0.5" y="1" width="8" height="4.5" fill="#aab0b8" stroke="#666" stroke-width="0.6"/><path d="M5 4.5 L8.5 8 M8.5 4.5 L5 8" stroke="#e02020" stroke-width="1.1"/></svg>
<div class="t" style="left:160px;top:143.5px;font-size:6.18px;color:#333">Controle do percurso</div>
<svg style="left:227px;top:134px" width="8" height="9"><path d="M2.5 0.5 L5.5 0.5 L5.5 3.5 L7.5 3.5 L4 7 L0.5 3.5 L2.5 3.5 Z" fill="#555"/><path d="M0.5 8.5 L7.5 8.5" stroke="#555" stroke-width="1"/></svg>
<div class="t" style="left:222.5px;top:143.5px;font-size:6.2px;color:#333">Salvar</div>
<svg style="left:258px;top:134px" width="9" height="9"><path d="M1 9 L1 4 L3 1 L5 4 L5 9" fill="none" stroke="#e8c020" stroke-width="1.6"/><path d="M3 1 L3 3" stroke="#d02020" stroke-width="1.6"/><path d="M5 9 L5 6 Q7 5 8.5 7 L8.5 9" fill="none" stroke="#30a030" stroke-width="1.6"/><path d="M1 9 L1 6" stroke="#30a030" stroke-width="1.6"/></svg>
<div class="t" style="left:244px;top:143.5px;font-size:6.2px;color:#333">Adensamento</div>
<svg style="left:296px;top:134px" width="6" height="9"><path d="M0 1 L6 1 M0 4.5 L6 4.5 M0 8 L6 8" stroke="#1f6fb8" stroke-width="1.5"/></svg>
<div class="t" style="left:286.5px;top:143.5px;font-size:6.5px;color:#333">Utilidade</div>

<!-- network canvas -->
<div class="a" style="left:6px;top:155.5px;width:366.5px;height:204.5px;background:#ffffff;overflow:hidden">
<svg style="left:0;top:0" width="367" height="205" viewBox="6 155.5 367 205">
<g fill="none" stroke="#3a3a3a" stroke-width="0.9">
<path d="M30 155.5 Q31 230 33 260 Q35 285 37 300"/>
<path d="M88 165 Q89 168 92 160"/>
<path d="M137.5 162.3 L229 155.7"/>
<path d="M137.5 175.2 Q200 175.8 250 177 L372.5 176.8" stroke-width="0.8"/>
<path d="M137.5 176.4 Q250 179.5 372.5 181" stroke-width="0.8"/>
<path d="M93 172 Q92 176 97 180 Q101 183 102 188" stroke-width="1.1"/>
<path d="M102 203.2 L133 205 L372.5 213.6" stroke-width="1.3"/>
<path d="M103 204 Q180 208.5 372.5 215.5" stroke-width="0.7"/>
<path d="M104 204.5 Q160 211 372.5 217.5" stroke-width="0.6"/>
<path d="M100 203 Q108 210 113 218 Q116 222 116 224" stroke-width="0.8"/>
<path d="M103 204 Q140 212 150 214 Q158 216 159 223" stroke-width="0.6"/>
<path d="M104 204 Q180 212 195 215 Q202 217 203 223" stroke-width="0.6"/>
<path d="M104 204 Q230 213 252 216 Q260 217 260 223" stroke-width="0.6"/>
<path d="M104 205 Q290 214 309 217 Q317 218 318 223" stroke-width="0.6"/>
<path d="M43 311 Q46 318 53 322 Q58 325 58 327" stroke-width="1"/>
<path d="M58 340 L60 361" stroke-width="0.9"/>
<path d="M327.5 359 L371.7 351" stroke-width="1"/>
</g>
</svg>
</div>

<!-- nodes -->
<div class="a" style="left:80.5px;top:158.5px;width:13px;height:14px;background:#5cf25c;border-radius:3px;border:0.8px solid #2a8a2a"></div>
<svg style="left:83px;top:161px" width="8" height="9"><rect x="0.3" y="0.3" width="7.4" height="8.4" rx="1" fill="#6a6aa8" stroke="#303060" stroke-width="0.6"/><path d="M1 2.3 L7 2.3 M1 4.3 L7 4.3 M1 6.3 L7 6.3" stroke="#dcdcf4" stroke-width="0.6"/></svg>
<div class="a" style="left:95.8px;top:155.5px;width:42px;height:21.2px;background:#fff;border:1px solid #a0a0a0;border-top:none;border-left-color:#c8c8c8"></div>
<div class="t" style="left:97px;top:157px;font-size:7.04px;color:#222;line-height:8px">CAVEDIO02</div>
<div class="t" style="left:97px;top:167.5px;font-size:7.04px;color:#222;line-height:8px">54,82 kW</div>

<div class="a" style="left:95px;top:187.8px;width:14px;height:14px;background:#5cf25c;border-radius:3px;border:0.8px solid #2a8a2a"></div>
<svg style="left:98px;top:190.5px" width="8" height="9"><rect x="0.3" y="0.3" width="7.4" height="8.4" rx="1" fill="#6a6aa8" stroke="#303060" stroke-width="0.6"/><path d="M1 2.3 L7 2.3 M1 4.3 L7 4.3 M1 6.3 L7 6.3" stroke="#dcdcf4" stroke-width="0.6"/></svg>
<div class="a" style="left:110.3px;top:184.5px;width:23.5px;height:20.5px;background:#fff;border:1px solid #bdbdbd"></div>
<div class="t" style="left:111px;top:187px;font-size:7.1px;color:#222">QG3</div>
<div class="t" style="left:111px;top:196.5px;font-size:7.55px;color:#222">23 kW</div>

<!-- yellow highlight + QSER -->
<div class="a" style="left:108px;top:211.8px;width:43.4px;height:34.6px;background:#ffff00;border-radius:2px"></div>
<svg style="left:0;top:0" width="1" height="1" viewBox="0 0 1 1"></svg>
<svg style="left:100px;top:200px" width="20" height="25" viewBox="100 200 20 25"><path d="M100 203 Q108 210 113 217 Q116 221 116 223" fill="none" stroke="#3a3a3a" stroke-width="0.8"/></svg>
<div class="a" style="left:125px;top:213.9px;width:25.2px;height:31.5px;background:#fdfad8;border:1px solid #c0bc98;border-radius:1.5px"></div>
<div class="t" style="left:125px;top:215.5px;font-size:7.1px;color:#222">QSER</div>
<div class="t" style="left:125px;top:225.5px;font-size:7.55px;color:#222">2 kW</div>
<div class="t" style="left:125px;top:235.5px;font-size:7.55px;color:#222">98,4 m</div>

<div class="a" style="left:168px;top:213px;width:26px;height:32px;background:#fff;border:1px solid #bdbdbd"></div>
<div class="t" style="left:168.5px;top:215.5px;font-size:7.1px;color:#222">QFM_P</div>
<div class="t" style="left:168.5px;top:225.5px;font-size:7.55px;color:#222">2 kW</div>
<div class="t" style="left:168.5px;top:235.5px;font-size:7.55px;color:#222">21,2 m</div>

<div class="a" style="left:211.8px;top:213px;width:39.6px;height:32px;background:#fff;border:1px solid #bdbdbd"></div>
<div class="t" style="left:212.5px;top:215.5px;font-size:7.1px;color:#222">QFM_LAB1</div>
<div class="t" style="left:212.5px;top:225.5px;font-size:7.55px;color:#222">2 kW</div>
<div class="t" style="left:212.5px;top:235.5px;font-size:7.55px;color:#222">10,4 m</div>

<div class="a" style="left:269.2px;top:213px;width:38.8px;height:32px;background:#fff;border:1px solid #bdbdbd"></div>
<div class="t" style="left:270px;top:215.5px;font-size:7.1px;color:#222">QFM_LAB2</div>
<div class="t" style="left:270px;top:225.5px;font-size:7.55px;color:#222">2 kW</div>
<div class="t" style="left:270px;top:235.5px;font-size:7.55px;color:#222">11,8 m</div>

<div class="a" style="left:326.8px;top:213px;width:38.5px;height:32px;background:#fff;border:1px solid #bdbdbd"></div>
<div class="t" style="left:327.5px;top:215.5px;font-size:7.1px;color:#222">QFM_LAB3</div>
<div class="t" style="left:327.5px;top:225.5px;font-size:7.55px;color:#222">2 kW</div>
<div class="t" style="left:327.5px;top:235.5px;font-size:7.55px;color:#222">12,4 m</div>

<!-- circle nodes -->
<svg style="left:108px;top:221px" width="264" height="17" viewBox="108 221 264 17">
<g>
<circle cx="116" cy="229.3" r="6.6" fill="#5cf05c" stroke="#3a8a3a" stroke-width="0.7"/><circle cx="116" cy="229.3" r="4.1" fill="#fae2c4" stroke="#6a6a6a" stroke-width="0.5"/>
<circle cx="159.5" cy="229.3" r="6.6" fill="#5cf05c" stroke="#3a8a3a" stroke-width="0.7"/><circle cx="159.5" cy="229.3" r="4.1" fill="#fae2c4" stroke="#6a6a6a" stroke-width="0.5"/>
<circle cx="203" cy="229.3" r="6.6" fill="#5cf05c" stroke="#3a8a3a" stroke-width="0.7"/><circle cx="203" cy="229.3" r="4.1" fill="#fae2c4" stroke="#6a6a6a" stroke-width="0.5"/>
<circle cx="260.3" cy="229.3" r="6.6" fill="#5cf05c" stroke="#3a8a3a" stroke-width="0.7"/><circle cx="260.3" cy="229.3" r="4.1" fill="#fae2c4" stroke="#6a6a6a" stroke-width="0.5"/>
<circle cx="317.5" cy="229.3" r="6.6" fill="#5cf05c" stroke="#3a8a3a" stroke-width="0.7"/><circle cx="317.5" cy="229.3" r="4.1" fill="#fae2c4" stroke="#6a6a6a" stroke-width="0.5"/>
<circle cx="375" cy="229.3" r="6.6" fill="#5cf05c" stroke="#3a8a3a" stroke-width="0.7"/>
</g>
<g fill="#2a4a9a">
<circle cx="114.6" cy="228.3" r="0.5"/><circle cx="117.4" cy="228.3" r="0.5"/><ellipse cx="116" cy="230.8" rx="1" ry="0.8" fill="#a04020"/>
<circle cx="158.1" cy="228.3" r="0.5"/><circle cx="160.9" cy="228.3" r="0.5"/><ellipse cx="159.5" cy="230.8" rx="1" ry="0.8" fill="#a04020"/>
<circle cx="201.6" cy="228.3" r="0.5"/><circle cx="204.4" cy="228.3" r="0.5"/><ellipse cx="203" cy="230.8" rx="1" ry="0.8" fill="#a04020"/>
<circle cx="258.9" cy="228.3" r="0.5"/><circle cx="261.7" cy="228.3" r="0.5"/><ellipse cx="260.3" cy="230.8" rx="1" ry="0.8" fill="#a04020"/>
<circle cx="316.1" cy="228.3" r="0.5"/><circle cx="318.9" cy="228.3" r="0.5"/><ellipse cx="317.5" cy="230.8" rx="1" ry="0.8" fill="#a04020"/>
</g>
</svg>

<div class="a" style="left:36.3px;top:297.5px;width:14px;height:14px;background:#5cf25c;border-radius:3px;border:0.8px solid #2a8a2a"></div>
<svg style="left:39.3px;top:300.2px" width="8" height="9"><rect x="0.3" y="0.3" width="7.4" height="8.4" rx="1" fill="#6a6aa8" stroke="#303060" stroke-width="0.6"/><path d="M1 2.3 L7 2.3 M1 4.3 L7 4.3 M1 6.3 L7 6.3" stroke="#dcdcf4" stroke-width="0.6"/></svg>
<div class="a" style="left:51.7px;top:293.3px;width:39px;height:21.5px;background:#fff;border:1px solid #bdbdbd"></div>
<div class="t" style="left:52.5px;top:295.5px;font-size:7.1px;color:#222">CELLA_TR2</div>
<div class="t" style="left:52.5px;top:305.5px;font-size:7.55px;color:#222">107,41 kW</div>

<div class="a" style="left:51px;top:326px;width:14px;height:14px;background:#5cf25c;border-radius:3px;border:0.8px solid #2a8a2a"></div>
<svg style="left:54px;top:328.7px" width="8" height="9"><rect x="0.3" y="0.3" width="7.4" height="8.4" rx="1" fill="#6a6aa8" stroke="#303060" stroke-width="0.6"/><path d="M1 2.3 L7 2.3 M1 4.3 L7 4.3 M1 6.3 L7 6.3" stroke="#dcdcf4" stroke-width="0.6"/></svg>
<div class="a" style="left:66.2px;top:322.6px;width:38.5px;height:22px;background:#fff;border:1px solid #bdbdbd;border-radius:1.5px"></div>
<div class="t" style="left:67px;top:324.5px;font-size:7.1px;color:#222">TR2</div>
<div class="t" style="left:67px;top:335.8px;font-size:7.55px;color:#222">107,41 kW</div>

<div class="a" style="left:65.4px;top:351.6px;width:36px;height:8.5px;background:#a9d1fa;border:1px solid #6aa6e8;border-bottom:none;border-radius:1.5px 1.5px 0 0;overflow:hidden">
<div class="t" style="left:1.2px;top:2px;font-size:7.1px;font-weight:bold;color:#1a2a50">AREA BLU</div></div>

<!-- vertical scrollbar of canvas -->
<div class="a" style="left:372.5px;top:155.5px;width:10px;height:204.5px;background:#f0f0f0"></div>
<svg style="left:374px;top:158px" width="6" height="4"><path d="M0.5 3.5 L3 1 L5.5 3.5" fill="none" stroke="#444" stroke-width="0.9"/></svg>
<div class="a" style="left:372.5px;top:275px;width:7.5px;height:16px;background:#cdcdcd"></div>
<svg style="left:374px;top:353px" width="6" height="4"><path d="M0.5 0.5 L3 3 L5.5 0.5" fill="none" stroke="#444" stroke-width="0.9"/></svg>
<!-- horizontal scrollbar -->
<div class="a" style="left:6px;top:360px;width:366.5px;height:9.5px;background:#f0f0f0"></div>
<svg style="left:9px;top:362px" width="4" height="6"><path d="M3.5 0.5 L1 3 L3.5 5.5" fill="none" stroke="#444" stroke-width="0.9"/></svg>
<div class="a" style="left:15.4px;top:360.7px;width:31px;height:7px;background:#cdcdcd"></div>
<svg style="left:366px;top:361px" width="4" height="6"><path d="M0.5 0.5 L3 3 L0.5 5.5" fill="none" stroke="#444" stroke-width="0.9"/></svg>

<!-- grid -->
<div class="a" style="left:6.2px;top:370.4px;width:374.3px;height:42.3px;background:#fff;border:1px solid #a8a8a8"></div>
<div class="a" style="left:7.2px;top:371.4px;width:372.3px;height:9.6px;background:#f7f7f7;border-bottom:1px solid #d8d8d8"></div>
<div class="a" style="left:7.2px;top:381px;width:9.1px;height:10.6px;background:#f7f7f7"></div>
<div class="a" style="left:16.3px;top:371.4px;width:1px;height:20px;background:#e0e0e0"></div>
<div class="a" style="left:24.4px;top:371.4px;width:1px;height:9.6px;background:#e0e0e0"></div>
<div class="a" style="left:76.4px;top:371.4px;width:1px;height:9.6px;background:#e0e0e0"></div>
<div class="a" style="left:137.9px;top:371.4px;width:1px;height:9.6px;background:#e0e0e0"></div>
<div class="a" style="left:192.4px;top:371.4px;width:1px;height:9.6px;background:#e0e0e0"></div>
<div class="a" style="left:234.6px;top:371.4px;width:1px;height:9.6px;background:#e0e0e0"></div>
<div class="a" style="left:286.8px;top:371.4px;width:1px;height:9.6px;background:#e0e0e0"></div>
<div class="a" style="left:338.4px;top:371.4px;width:1px;height:9.6px;background:#e0e0e0"></div>
<div class="t" style="left:25.7px;top:372.3px;font-size:6.08px;color:#333">Cabos na entrada</div>
<div class="t" style="left:77.7px;top:372.3px;font-size:6.2px;color:#333">Função</div>
<div class="t" style="left:140.3px;top:372.3px;font-size:6.19px;color:#333">Denominação</div>
<div class="t" style="left:194px;top:372.3px;font-size:6.33px;color:#333">Comprimento</div>
<div class="t" style="left:236.3px;top:372.3px;font-size:6.2px;color:#333">Cabo</div>
<div class="t" style="left:288.2px;top:372.3px;font-size:6.2px;color:#333">Designação</div>
<div class="t" style="left:340.2px;top:372.3px;font-size:6.2px;color:#333">Origem</div>
<!-- selected row -->
<div class="a" style="left:16.3px;top:381.3px;width:364.2px;height:10.3px;background:#3394ff"></div>
<div class="a" style="left:24.4px;top:381.3px;width:1px;height:10.3px;background:#7ab8ff"></div>
<div class="a" style="left:76.4px;top:381.3px;width:1px;height:10.3px;background:#7ab8ff"></div>
<div class="a" style="left:137.9px;top:381.3px;width:1px;height:10.3px;background:#7ab8ff"></div>
<div class="a" style="left:192.4px;top:381.3px;width:1px;height:10.3px;background:#7ab8ff"></div>
<div class="a" style="left:234.6px;top:381.3px;width:1px;height:10.3px;background:#7ab8ff"></div>
<div class="a" style="left:286.8px;top:381.3px;width:1px;height:10.3px;background:#7ab8ff"></div>
<div class="a" style="left:338.4px;top:381.3px;width:1px;height:10.3px;background:#7ab8ff"></div>
<svg style="left:11px;top:384px" width="4" height="6"><path d="M0.5 0 L3.5 3 L0.5 6 Z" fill="#111"/></svg>
<svg style="left:17px;top:382.5px" width="7" height="7"><rect x="0.5" y="2" width="6" height="4.5" fill="#d8d0c0" stroke="#666" stroke-width="0.5"/><circle cx="3.5" cy="2.5" r="1.6" fill="#fff" stroke="#555" stroke-width="0.5"/></svg>
<div class="t" style="left:25.7px;top:382.5px;font-size:6.2px;color:#fff;transform:scale(.871,1.14);transform-origin:0 50%">QSER</div>
<div class="t" style="left:77.7px;top:382.5px;font-size:6.2px;color:#fff;transform:scale(.894,1.14);transform-origin:0 50%">DISTR_SECUNDARIA</div>
<div class="t" style="left:140.3px;top:382.5px;font-size:6.2px;color:#fff;transform:scale(.852,1.14);transform-origin:0 50%">SERVIÇOS</div>
<div class="t" style="left:214.3px;top:382.5px;font-size:5.8px;color:#fff">98,4 m</div>
<div class="t" style="left:236.3px;top:382.5px;font-size:6.0px;color:#fff">3G10</div>
<div class="a" style="left:287.8px;top:381.3px;width:50px;height:10.3px;overflow:hidden"><div class="t" style="left:0.4px;top:1.2px;font-size:6.2px;color:#fff;transform:scale(1.0,1.14);transform-origin:0 50%">FG16OM16 0.6/1 kV</div></div>
<div class="a" style="left:339.4px;top:381.3px;width:41px;height:10.3px;overflow:hidden"><div class="t" style="left:0.8px;top:1.2px;font-size:6.2px;color:#fff;transform:scale(.96,1.14);transform-origin:0 50%">+AREA GIALLA</div></div>

<!-- status bar -->
<div class="a" style="left:1px;top:415.2px;width:799px;height:13.8px;background:#d3d3d3"></div>
<div class="a" style="left:1px;top:414.5px;width:799px;height:4.5px;background:linear-gradient(180deg,#bdbdbd,#d3d3d3)"></div>
<div class="t" style="left:2px;top:419.5px;font-size:6.05px;color:#333">Clique para selecionar, TAB para alternativas, CTRL adiciona, SHIFT cancela a seleção.</div>
<svg style="left:280.5px;top:418px" width="10" height="10"><rect x="0.5" y="4" width="5" height="5.5" fill="#5a9ae0" stroke="#2a5aa0" stroke-width="0.6"/><rect x="4.5" y="3" width="5" height="6.5" fill="#e8e8e8" stroke="#777" stroke-width="0.6"/><circle cx="4" cy="2" r="1.8" fill="#50b050"/></svg>
<div class="a" style="left:291.7px;top:418px;width:106px;height:8.7px;background:#fff;border:1px solid #c8c8c8"></div>
<svg style="left:392px;top:420.5px" width="5" height="4"><path d="M0.5 0.5 L2.5 2.5 L4.5 0.5" fill="none" stroke="#888" stroke-width="0.7"/></svg>
<svg style="left:401px;top:418px" width="10" height="10"><path d="M1 9 L6 2 L8 3 L3 9.5 Z" fill="#bbb" stroke="#777" stroke-width="0.5"/><circle cx="7" cy="2" r="1.5" fill="#ddd" stroke="#777" stroke-width="0.5"/></svg>
<div class="t" style="left:411px;top:419px;font-size:6px;color:#222">:0</div>
<svg style="left:427px;top:418px" width="9" height="9"><rect x="0.5" y="0.5" width="8" height="8" fill="#eee" stroke="#555" stroke-width="0.7"/><rect x="0.5" y="0.5" width="8" height="2" fill="#555"/><rect x="2" y="4" width="3" height="3" fill="#888"/></svg>
<svg style="left:440px;top:418px" width="8" height="9"><rect x="0.5" y="0.5" width="7" height="8" fill="#ccc" stroke="#999" stroke-width="0.6"/><path d="M2 3 L6 3 M2 5 L6 5" stroke="#999" stroke-width="0.6"/></svg>
<div class="a" style="left:449.7px;top:418px;width:108px;height:9.7px;background:#fff;border:1px solid #c8c8c8"></div>
<div class="t" style="left:452px;top:419px;font-size:6.2px;color:#999">Modelo principal</div>
<svg style="left:551px;top:421px" width="5" height="4"><path d="M0.5 0.5 L2.5 2.5 L4.5 0.5" fill="none" stroke="#888" stroke-width="0.7"/></svg>
<!-- right status icons -->
<svg style="left:680px;top:418px" width="9" height="9"><path d="M1 2 L8 2 L6 5 L6 8 L3 8 L3 5 Z" fill="#e8c040" stroke="#555" stroke-width="0.5"/></svg>
<svg style="left:692px;top:418px" width="9" height="9"><rect x="0.5" y="3" width="7" height="5.5" fill="#cfe0f4" stroke="#4a6aa0" stroke-width="0.6"/><path d="M5 0.5 L8.5 4 M8.5 0.5 L5 4" stroke="#e02020" stroke-width="1"/></svg>
<svg style="left:704px;top:418px" width="9" height="9"><rect x="0.5" y="1" width="5" height="7.5" fill="#e8a040" stroke="#885020" stroke-width="0.5"/><rect x="4" y="4" width="4.5" height="4.5" fill="#f4d090" stroke="#885020" stroke-width="0.5"/></svg>
<svg style="left:716px;top:418px" width="9" height="9"><rect x="0.5" y="1" width="6" height="7.5" fill="#cfe0f4" stroke="#4a6aa0" stroke-width="0.6"/><path d="M5 4 L8.5 8.5" stroke="#333" stroke-width="0.8"/></svg>
<svg style="left:729px;top:418px" width="9" height="10"><path d="M0.5 2.5 L4.5 2.5 M2.5 0.5 L2.5 4.5" stroke="#222" stroke-width="0.9"/><path d="M4 4 L8.5 8.5 L6.5 8.5 L5.5 9.5" fill="#fff" stroke="#222" stroke-width="0.7"/></svg>
<svg style="left:744px;top:419px" width="8" height="8"><circle cx="4" cy="4" r="3" fill="none" stroke="#aaa" stroke-width="1.3"/></svg>
<svg style="left:754px;top:418px" width="9" height="9"><path d="M0.5 0.5 L8.5 0.5 L5.5 4.5 L5.5 8.5 L3.5 7.5 L3.5 4.5 Z" fill="#dce8f4" stroke="#556677" stroke-width="0.7"/></svg>
<div class="t" style="left:762.5px;top:419px;font-size:5.5px;color:#333">:1</div>
<div class="a" style="left:0;top:428px;width:800px;height:1px;background:#6aa5e0"></div>

</body></html>
